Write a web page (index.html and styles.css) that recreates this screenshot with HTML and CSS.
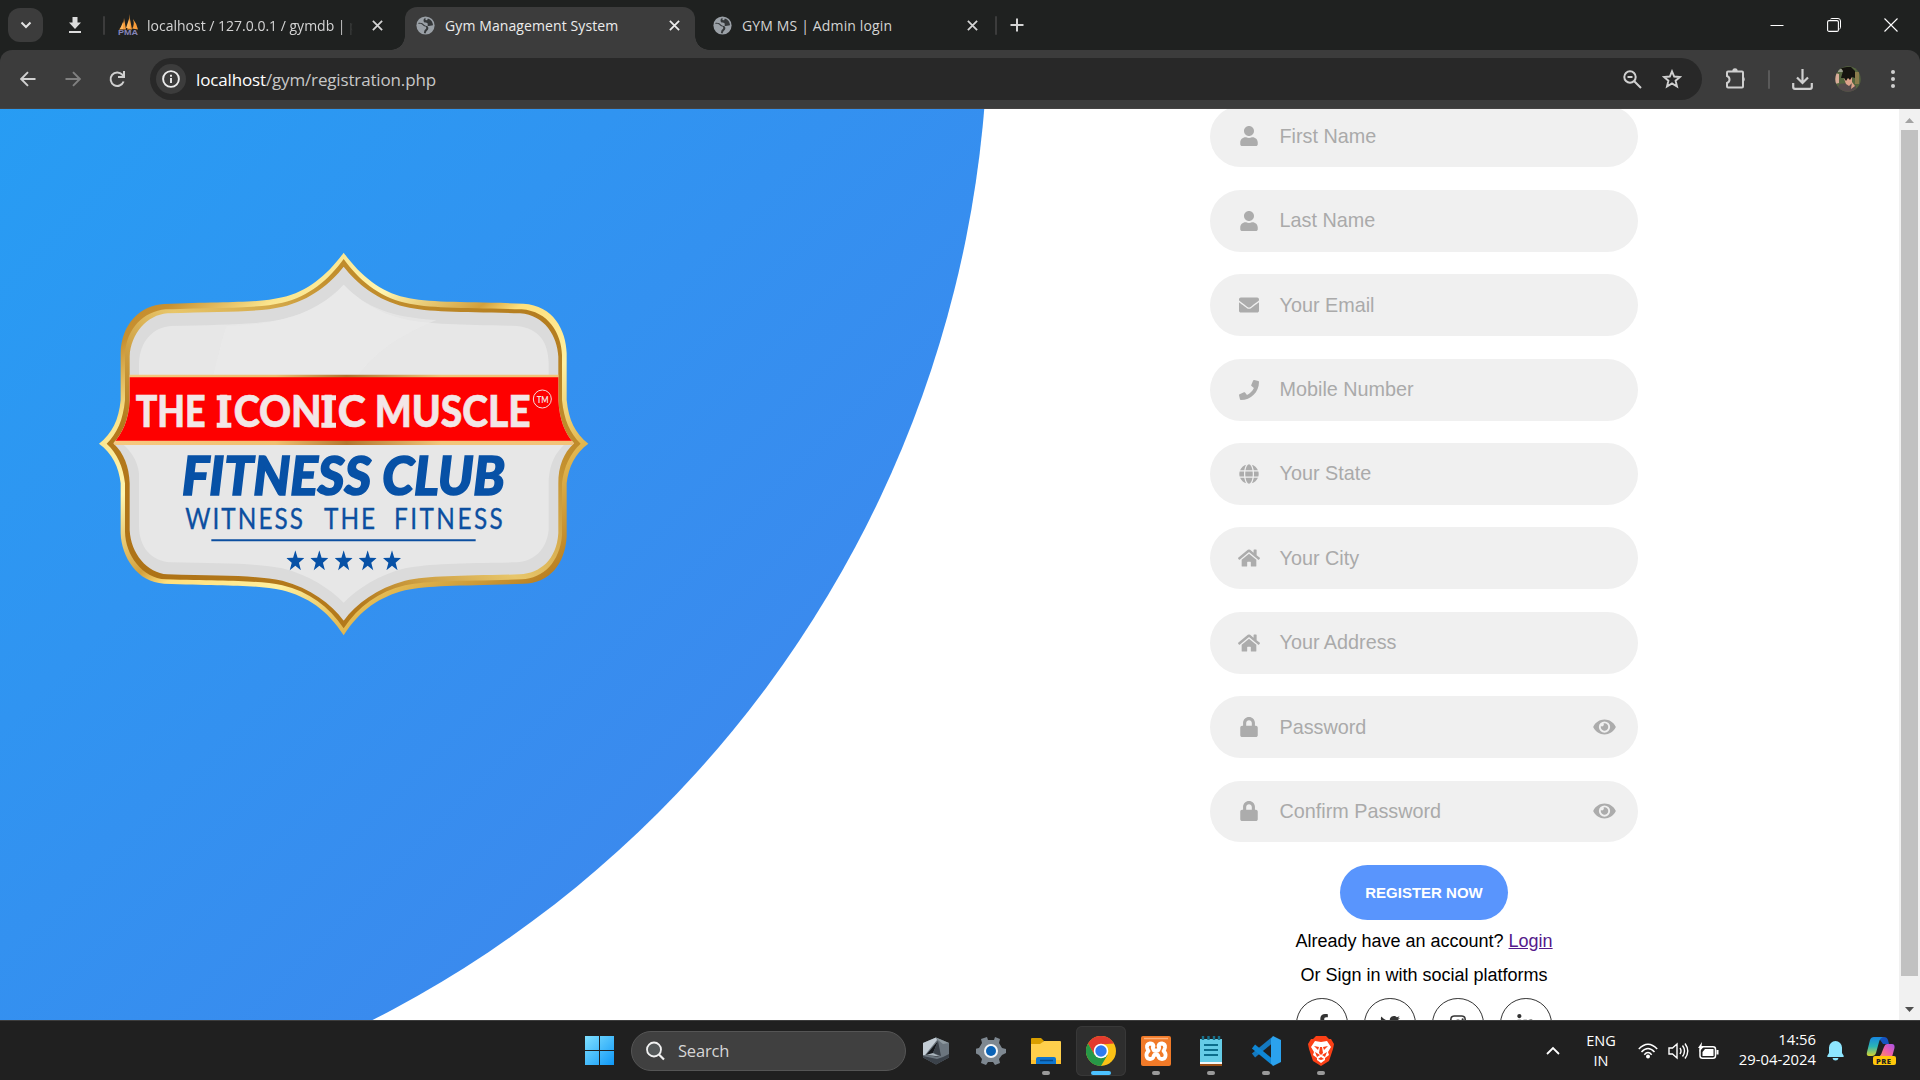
FILE: index.html
```html
<!DOCTYPE html>
<html lang="en">
<head>
<meta charset="utf-8">
<title>Gym Management System</title>
<link rel="stylesheet" href="styles.css">
</head>
<body>
<svg class="defs" width="0" height="0">
  <defs>
    <symbol id="globe-tab" viewBox="0 0 24 24"><circle cx="12" cy="12" r="11.500" fill="#9aa0a6"/><path fill="#35383a" d="M12 2.500c-2.500.5-3 3-2 5 1 1.200 3 .5 4.500 1.500 1 1-.5 2.500.5 3.500 2 .8 3.500-1 5.500-.5l1-.5A9.500 9.500 0 0 0 15 3l-1 2.500-2-.5zM2.800 10c2.500-.5 5 0 6.200 2 1 1.500 4 .5 4 3-.2 2-2.500 2-2.500 4l-.5 2.500 2 .5 1-2.500c1.500-1.500 3-2.500 2.500-5-.8-2.500-4-1.500-5-3-1.500-2.500-4.500-3.500-7.200-3z"/></symbol>
    <symbol id="close" viewBox="0 0 10 10"><path d="M.8.800 9.200 9.200M9.200.800.800 9.200" fill="none" stroke="currentColor" stroke-width="1.600"/></symbol>
    <symbol id="user" viewBox="0 0 448 512"><path d="M224 256c70.700 0 128-57.300 128-128S294.700 0 224 0 96 57.300 96 128s57.300 128 128 128zm89.600 32h-16.700c-22.200 10.200-46.900 16-72.900 16s-50.600-5.800-72.900-16h-16.700C60.200 288 0 348.200 0 422.400V464c0 26.500 21.500 48 48 48h352c26.500 0 48-21.500 48-48v-41.600c0-74.200-60.200-134.400-134.400-134.400z"/></symbol>
    <symbol id="mail" viewBox="0 0 512 512"><path d="M502.300 190.800c3.900-3.100 9.700-.2 9.700 4.700V400c0 26.500-21.500 48-48 48H48c-26.500 0-48-21.500-48-48V195.600c0-5 5.700-7.800 9.700-4.700 22.400 17.400 52.100 39.500 154.100 113.600 21.100 15.400 56.700 47.800 92.200 47.600 35.700.3 72-32.800 92.300-47.600 102-74.100 131.600-96.300 154-113.700zM256 320c23.200.4 56.600-29.200 73.400-41.400 132.700-96.300 142.800-104.700 173.400-128.700 5.800-4.500 9.200-11.500 9.200-18.900v-19c0-26.500-21.500-48-48-48H48c-26.500 0-48 21.500-48 48v19c0 7.400 3.400 14.300 9.200 18.900 30.600 23.900 40.700 32.400 173.400 128.700 16.800 12.200 50.200 41.800 73.400 41.400z"/></symbol>
    <symbol id="phone" viewBox="0 0 512 512"><path d="M493.400 24.600l-104-24c-11.300-2.600-22.900 3.300-27.500 13.900l-48 112c-4.200 9.800-1.400 21.300 6.900 28l60.600 49.600c-36 76.700-98.900 140.500-177.200 177.200l-49.600-60.600c-6.800-8.300-18.200-11.100-28-6.900l-112 48C3.900 366.500-2 378.100.6 389.400l24 104C27.100 504.200 36.700 512 48 512c256.100 0 464-207.500 464-464 0-11.200-7.700-20.900-18.600-23.400z"/></symbol>
    <symbol id="globe" viewBox="0 0 496 512"><path d="M336.500 160C322 70.700 287.800 8 248 8s-74 62.700-88.500 152h177zM152 256c0 22.200 1.200 43.500 3.300 64h185.300c2.100-20.500 3.300-41.800 3.300-64s-1.200-43.500-3.300-64H155.300c-2.100 20.500-3.300 41.800-3.300 64zm324.700-96c-28.600-67.900-86.500-120.400-158-141.600 24.400 33.800 41.200 84.700 50 141.600h108zM177.200 18.400C105.800 39.600 47.800 92.100 19.300 160h108c8.700-56.900 25.500-107.800 49.900-141.600zM487.400 192H372.700c2.100 21 3.300 42.500 3.300 64s-1.200 43-3.300 64h114.600c5.500-20.500 8.600-41.800 8.600-64s-3.100-43.500-8.500-64zM120 256c0-21.500 1.200-43 3.300-64H8.600C3.200 212.500 0 233.800 0 256s3.200 43.500 8.600 64h114.600c-2-21-3.200-42.500-3.200-64zm39.500 96c14.500 89.300 48.700 152 88.500 152s74-62.700 88.500-152h-177zm159.300 141.600c71.400-21.200 129.400-73.700 158-141.600h-108c-8.800 56.900-25.600 107.800-50 141.600zM19.300 352c28.600 67.900 86.500 120.400 158 141.600-24.400-33.800-41.200-84.700-50-141.600h-108z"/></symbol>
    <symbol id="home" viewBox="0 0 576 512"><path d="M280.400 148.300L96 300.100V464a16 16 0 0 0 16 16l112.100-.3a16 16 0 0 0 15.900-16V368a16 16 0 0 1 16-16h64a16 16 0 0 1 16 16v95.600a16 16 0 0 0 16 16.100L464 480a16 16 0 0 0 16-16V300L295.700 148.300a12.200 12.200 0 0 0-15.300 0zM571.600 251.500L488 182.600V44.100a12 12 0 0 0-12-12h-56a12 12 0 0 0-12 12v72.600L318.500 43a48 48 0 0 0-61 0L4.300 251.500a12 12 0 0 0-1.600 16.900l25.500 31a12 12 0 0 0 16.900 1.600L280.400 107.200a12.200 12.200 0 0 1 15.300 0L531 301a12 12 0 0 0 16.900-1.600l25.500-31a12 12 0 0 0-1.800-16.900z"/></symbol>
    <symbol id="lock" viewBox="0 0 448 512"><path d="M400 224h-24v-72C376 68.200 307.800 0 224 0S72 68.200 72 152v72H48c-26.500 0-48 21.500-48 48v192c0 26.500 21.500 48 48 48h352c26.500 0 48-21.500 48-48V272c0-26.500-21.500-48-48-48zm-104 0H152v-72c0-39.700 32.300-72 72-72s72 32.300 72 72v72z"/></symbol>
    <symbol id="eye" viewBox="0 0 576 512"><path d="M572.500 241.400C518.300 135.600 410.900 64 288 64S57.700 135.600 3.500 241.400a32.400 32.400 0 0 0 0 29.200C57.700 376.400 165.100 448 288 448s230.300-71.600 284.500-177.400a32.400 32.400 0 0 0 0-29.200zM288 400a144 144 0 1 1 144-144 143.900 143.900 0 0 1-144 144zm0-240a95.300 95.300 0 0 0-25.300 3.800 47.900 47.900 0 0 1-66.900 66.900A95.800 95.800 0 1 0 288 160z"/></symbol>
    <symbol id="star" viewBox="0 0 20 20" preserveAspectRatio="none"><path d="M10 0 12.500 7.100 20 7.300 14 11.900 16.200 19.200 10 14.800 3.800 19.200 6 11.900 0 7.300 7.500 7.100Z"/></symbol>
  </defs>
</svg>

<header class="tabstrip">
  <button class="tab-search" aria-label="Search tabs"><svg width="12" height="8" viewBox="0 0 12 8"><path d="M1.500 1.500 6 6 10.500 1.500" fill="none" stroke="#e3e3e3" stroke-width="2"/></svg></button>
  <div class="pinned"><svg width="14" height="16" viewBox="0 0 14 16"><path d="M4.500 0h5v5.500h3.500L7 12 1 5.500h3.500zM1 14h12v2H1z" fill="#dcdcdc"/></svg></div>
  <i class="sep"></i>
  <div class="tab tab-first">
    <svg width="21" height="22" viewBox="0 0 21 22"><path d="M1 15.500Q6 11 6 4L8 15.500ZM9 15.500Q12 8 11 0L14 15.500ZM14 14.500Q17 11 15 5Q19 10 20 15.500Z" fill="#f89c3a"/><path d="M2 15 5 8v7zM8 14l3-9 1 9z" fill="#ffb85e"/><text x="0" y="21" class="pma" textLength="20" lengthAdjust="spacingAndGlyphs">PMA</text></svg>
    <span class="title fade"><span class="t1">localhost / 127.0.0.1 / gymdb | p</span></span>
    <svg class="x" width="11" height="11"><use href="#close"/></svg>
  </div>
  <div class="tab tab-active">
    <svg width="19" height="19"><use href="#globe-tab"/></svg>
    <span class="title t2">Gym Management System</span>
    <svg class="x" width="11" height="11"><use href="#close"/></svg>
  </div>
  <div class="tab tab-last">
    <svg width="19" height="19"><use href="#globe-tab"/></svg>
    <span class="title t3">GYM MS | Admin login</span>
    <svg class="x" width="11" height="11"><use href="#close"/></svg>
  </div>
  <i class="sep sep-end"></i>
  <svg class="plus" width="14" height="14" viewBox="0 0 14 14"><path d="M7 .5v13M.5 7h13" stroke="#d4d4d4" stroke-width="2"/></svg>
  <div class="winctl">
    <svg width="14" height="14" viewBox="0 0 14 14"><path d="M.5 7.500h13" stroke="#fff"/></svg>
    <svg width="14" height="14" viewBox="0 0 14 14"><path d="M3.500 1Q4 .5 5 .5h6Q13.500.500 13.500 3v6.500q0 1-1 1.500" fill="none" stroke="#fff"/><rect x=".6" y="2.600" width="10.800" height="10.800" rx="1.500" fill="none" stroke="#fff" stroke-width="1.100"/></svg>
    <svg width="14" height="14" viewBox="0 0 14 14"><path d="M.5.500l13 13M13.500.500l-13 13" stroke="#fff" stroke-width="1.100"/></svg>
  </div>
</header>

<nav class="toolbar">
  <svg class="back" width="16" height="16" viewBox="0 0 16 16"><path d="M15.500 8H1.500M8 1.200 1.200 8 8 14.800" fill="none" stroke="#d0d0d0" stroke-width="1.900"/></svg>
  <svg class="forward" width="16" height="16" viewBox="0 0 16 16"><path d="M.5 8h14M8 1.200 14.800 8 8 14.800" fill="none" stroke="#808080" stroke-width="1.900"/></svg>
  <svg class="reload" width="17" height="17" viewBox="0 0 17 17"><path d="M14.600 10.500A6.700 6.700 0 1 1 13.300 3.700L15 5.500" fill="none" stroke="#d0d0d0" stroke-width="2"/><path d="M16 0v7H9V5h5V0z" fill="#d0d0d0"/></svg>
  <div class="omnibox">
    <span class="info"><svg width="18" height="18" viewBox="0 0 18 18"><circle cx="9" cy="9" r="7.900" fill="none" stroke="#ececec" stroke-width="1.900"/><path d="M9 8v5M9 4.700v2" stroke="#ececec" stroke-width="1.900"/></svg></span>
    <span class="url"><b>localhost</b>/gym/registration.php</span>
    <svg class="lens" width="19" height="19" viewBox="0 0 19 19"><circle cx="7" cy="7" r="5.700" fill="none" stroke="#d0d0d0" stroke-width="2"/><path d="M4.500 7h5M11 11l7 7" stroke="#d0d0d0" stroke-width="2"/></svg>
    <svg class="bookmark" width="20" height="20" viewBox="0 0 20 20"><path d="M10 2.300 12.200 7.500 18 8 13.600 11.700 15 17.500 10 14.400 5 17.500 6.400 11.700 2 8 7.800 7.500Z" fill="none" stroke="#d0d0d0" stroke-width="1.900"/></svg>
  </div>
  <svg class="ext" width="22" height="22" viewBox="0 0 22 22"><path d="M3 3.500h14q1 0 1 1v14q0 1-1 1H3q-1 0-1-1V15q2.500-1 2.500-3.500T2 8V4.500q0-1 1-1z" fill="none" stroke="#cfcfcf" stroke-width="2"/><path d="M7.300 3.500a2.500 3 0 0 1 5.400 0zM18 8.500a3 3 0 0 1 0 5.500z" fill="#cfcfcf"/></svg>
  <i class="sep bar"></i>
  <svg class="dl" width="21" height="21" viewBox="0 0 21 21"><path d="M10.500 0v13.500M5 8.500l5.500 5.500L16 8.500M1.200 14v4q0 1.800 1.800 1.800h15q1.800 0 1.800-1.800v-4" fill="none" stroke="#cfcfcf" stroke-width="2.200"/></svg>
  <svg class="avatar" width="26" height="26" viewBox="0 0 26 26"><clipPath id="av"><circle cx="13" cy="13" r="12.700"/></clipPath><g clip-path="url(#av)"><path fill="#55653f" d="M0 0h26v26H0z"/><path fill="#9a9d8c" d="M3 3h6v3H3z"/><path fill="#d8ab98" d="M0 7l4 1v9l-4 1z"/><path fill="#8b7c4c" d="M20 6h4v12h-4z"/><path fill="#554b4b" d="M2 26 4 18l8-1 9 3v6z"/><path fill="#dfa38b" d="M8 10h9v7l-3 3-3-2zM17 16l3 4-4 3z"/><path fill="#15130f" d="M6 12 8 5 6 2l6-1 4 0 4 4 0 7-3-1-2 3-2-2-2 3-2-3z"/></g></svg>
  <svg class="menu" width="4" height="18" viewBox="0 0 4 18"><g fill="#cfcfcf"><circle cx="2" cy="2" r="2"/><circle cx="2" cy="9" r="2"/><circle cx="2" cy="16" r="2"/></g></svg>
</nav>

<main class="page">
  <section class="hero">
    <div class="disc"></div>
    <svg class="logo" width="510" height="400" viewBox="0 0 1530 1200">
      <defs>
        <linearGradient id="gold" x1="0" y1="0" x2="1" y2="1"><stop offset="0" stop-color="#b9842b"/><stop offset=".14" stop-color="#c8902f"/><stop offset=".24" stop-color="#fbe58e"/><stop offset=".34" stop-color="#fff6b0"/><stop offset=".46" stop-color="#d3a03c"/><stop offset=".5" stop-color="#ffe07c"/><stop offset=".62" stop-color="#fff0a0"/><stop offset=".74" stop-color="#e3b951"/><stop offset=".9" stop-color="#b5791c"/><stop offset="1" stop-color="#d9a03a"/></linearGradient>
        <linearGradient id="gold2" x1="1" y1="0" x2="0" y2="1"><stop offset="0" stop-color="#a96f14"/><stop offset=".3" stop-color="#c4912f"/><stop offset=".5" stop-color="#e8c66a"/><stop offset=".7" stop-color="#b57b1d"/><stop offset="1" stop-color="#a96d12"/></linearGradient>
        <linearGradient id="band"><stop offset="0" stop-color="#f6c981"/><stop offset=".35" stop-color="#f0c070"/><stop offset=".5" stop-color="#b3772d"/><stop offset=".7" stop-color="#f2c67a"/><stop offset="1" stop-color="#f2c278"/></linearGradient>
        <clipPath id="inner"><path d="M761 80C800 130 860 180 945 200C1020 218 1120 214 1290 220C1365 225 1402 290 1405 350V480C1408 540 1425 580 1452 610C1420 640 1405 680 1405 730V880C1400 960 1350 1000 1290 1003C1120 1008 1020 1006 945 1022C860 1045 800 1090 761 1142C722 1090 662 1045 577 1022C502 1006 402 1008 232 1003C172 1000 122 940 119 870V730C117 680 102 640 70 610C97 580 117 540 119 480V350C122 280 172 225 232 220C402 214 502 218 577 200C662 180 722 130 761 80Z"/></clipPath>
      </defs>
      <path fill="url(#gold)" d="M761 38C810 105 870 155 945 172C1020 190 1120 184 1300 191C1390 196 1428 270 1430 340V480C1436 540 1455 580 1495 611C1455 640 1436 680 1430 730V890C1425 970 1380 1030 1300 1031C1120 1038 1020 1034 945 1051C870 1070 810 1110 761 1186C712 1110 652 1070 577 1051C502 1034 402 1038 222 1031C142 1028 94 950 92 880V730C86 680 67 640 27 611C67 580 86 540 92 480V340C94 250 152 196 222 192C402 184 502 190 577 172C652 155 712 105 761 38Z"/>
      <path fill="url(#gold2)" d="M761 57C805 118 865 170 945 188C1020 206 1120 202 1295 208C1375 214 1414 280 1416 345V480C1422 540 1440 580 1472 611C1440 640 1422 680 1416 730V885C1410 965 1360 1016 1295 1018C1120 1024 1020 1020 945 1036C865 1055 805 1100 761 1165C717 1100 657 1055 577 1036C502 1020 402 1024 227 1018C157 1014 106 945 105 875V730C99 680 82 640 50 611C82 580 99 540 105 480V345C108 265 162 214 227 208C402 202 502 206 577 188C657 170 717 118 761 57Z"/>
      <g clip-path="url(#inner)">
        <path fill="#dbdbdb" d="M0 0h1530v1200H0z"/>
        <path fill="#e7e7e7" d="M761 134C805 180 865 220 945 238C1020 254 1120 254 1280 258C1350 265 1375 310 1376 370V520C1380 560 1400 590 1425 611C1395 640 1380 670 1376 720V870C1370 930 1330 965 1280 967C1120 970 1020 970 945 985C865 1005 805 1045 761 1088C717 1045 657 1005 577 985C502 970 402 970 242 967C182 963 148 920 147 860V700C143 660 120 630 97 611C130 590 143 560 147 520V370C150 300 192 262 242 258C402 254 502 254 577 238C657 220 717 180 761 134Z"/>
        <path fill="#ebebeb" d="M370 405C390 330 400 280 410 258C520 258 680 230 761 134C830 205 910 232 1040 240C940 280 860 330 805 405Z" opacity=".6"/>
        <path fill="url(#band)" d="M60 404h1420v211H60z"/>
        <path fill="#fe0000" d="M60 412h1420v190H60z"/>
      </g>
      <text class="l1" x="137" y="562" textLength="210" lengthAdjust="spacingAndGlyphs">THE</text>
      <text class="l1" y="562"><tspan x="381">I</tspan><tspan x="431" textLength="264" lengthAdjust="spacingAndGlyphs">CON</tspan><tspan x="695">I</tspan><tspan x="743" textLength="84" lengthAdjust="spacingAndGlyphs">C</tspan></text>
      <path fill="#f3e6e6" d="M380 466h44v15h-44zM380 548h44v15h-44zM694 466h44v15h-44zM694 548h44v15h-44z"/>
      <text class="l1" x="854" y="562" textLength="468" lengthAdjust="spacingAndGlyphs">MUSCLE</text>
      <circle cx="1357" cy="477" r="27" fill="none" stroke="#f4dede" stroke-width="3"/>
      <text class="tm" x="1340" y="488" textLength="36" lengthAdjust="spacingAndGlyphs">TM</text>
      <text class="l2" x="276" y="764" textLength="568" lengthAdjust="spacingAndGlyphs">FITNESS</text>
      <text class="l2" x="877" y="764" textLength="368" lengthAdjust="spacingAndGlyphs">CLUB</text>
      <g transform="scale(.85 1)">
        <text class="l3" x="336" y="868" textLength="416">WITNESS</text>
        <text class="l3" x="826" y="868" textLength="180">THE</text>
        <text class="l3" x="1073" y="868" textLength="384">FITNESS</text>
      </g>
      <path d="M364 901h793" stroke="#0c4fa0" stroke-width="6"/>
      <g fill="#0751a6"><use href="#star" x="589" y="931" width="54" height="62"/><use href="#star" x="661" y="931" width="54" height="62"/><use href="#star" x="734" y="931" width="54" height="62"/><use href="#star" x="806" y="931" width="54" height="62"/><use href="#star" x="879" y="931" width="54" height="62"/></g>
    </svg>
  </section>
  <form class="form">
    <label class="field"><svg class="ico" width="18" height="20"><use href="#user"/></svg><span>First Name</span></label>
    <label class="field"><svg class="ico" width="18" height="20"><use href="#user"/></svg><span>Last Name</span></label>
    <label class="field"><svg class="ico" width="20" height="20"><use href="#mail"/></svg><span>Your Email</span></label>
    <label class="field"><svg class="ico" width="20" height="20"><use href="#phone"/></svg><span>Mobile Number</span></label>
    <label class="field"><svg class="ico" width="20" height="20"><use href="#globe"/></svg><span>Your State</span></label>
    <label class="field"><svg class="ico" width="22" height="20"><use href="#home"/></svg><span>Your City</span></label>
    <label class="field"><svg class="ico" width="22" height="20"><use href="#home"/></svg><span>Your Address</span></label>
    <label class="field"><svg class="ico" width="18" height="20"><use href="#lock"/></svg><span>Password</span><svg class="eye" width="23" height="20"><use href="#eye"/></svg></label>
    <label class="field"><svg class="ico" width="18" height="20"><use href="#lock"/></svg><span>Confirm Password</span><svg class="eye" width="23" height="20"><use href="#eye"/></svg></label>
    <button class="submit" type="button">REGISTER NOW</button>
    <p class="account">Already have an account? <a href="#">Login</a></p>
    <p class="social-text">Or Sign in with social platforms</p>
    <div class="social">
      <a class="soc"><svg width="13" height="20" viewBox="0 0 320 512"><path d="M279.100 288l14.300-92.700h-89V135.200c0-25.300 12.400-50 52.200-50H297V6.300S260.400 0 225.400 0C152.100 0 104.100 44.400 104.100 124.700v70.600H22.900V288h81.200v224h100.200V288z"/></svg></a>
      <a class="soc"><svg width="20" height="20" viewBox="0 0 512 512"><path d="M459.400 151.700c.3 4.500.3 9.100.3 13.600 0 138.700-105.600 298.600-298.600 298.600-59.500 0-114.700-17.200-161.100-47.100 8.400 1 16.600 1.300 25.300 1.300 49.100 0 94.200-16.600 130.300-44.800-46.100-1-84.800-31.200-98.100-72.800 6.500 1 13 1.600 19.800 1.600 9.400 0 18.800-1.300 27.600-3.600-48.100-9.700-84.100-52-84.100-103v-1.300c14 7.800 30.200 12.700 47.400 13.300-28.300-18.800-46.800-51-46.800-87.400 0-19.500 5.200-37.400 14.300-53 51.700 63.700 129.300 105.300 216.400 109.800-1.600-7.800-2.600-15.900-2.600-24 0-57.800 46.800-104.900 104.900-104.900 30.200 0 57.500 12.700 76.700 33.100 23.700-4.500 46.500-13.300 66.600-25.300-7.800 24.400-24.400 44.800-46.100 57.800 21.100-2.300 41.600-8.100 60.400-16.200-14.300 20.800-32.200 39.300-52.600 54.300z"/></svg></a>
      <a class="soc"><svg width="18" height="20" viewBox="0 0 448 512"><path fill="none" stroke="#333" stroke-width="40" d="M132 52h184q92 0 92 92v224q0 92-92 92H132q-92 0-92-92V144q0-92 92-92z"/><circle cx="224" cy="256" r="94" fill="none" stroke="#333" stroke-width="42"/><circle cx="343" cy="137" r="27"/></svg></a>
      <a class="soc"><svg width="18" height="20" viewBox="0 0 448 512"><path d="M100.300 448H7.400V148.900h92.900zM53.800 108.100C24.100 108.100 0 83.500 0 53.800a53.800 53.800 0 0 1 107.600 0c0 29.700-24.100 54.300-53.800 54.300zM447.900 448h-92.700V302.400c0-34.700-.7-79.200-48.300-79.200-48.300 0-55.700 37.700-55.700 76.700V448h-92.800V148.900h89.100v40.800h1.300c12.400-23.500 42.700-48.300 87.900-48.300 94 0 111.300 61.900 111.300 142.300V448z"/></svg></a>
    </div>
  </form>
  <div class="scroll">
    <svg width="9" height="5" viewBox="0 0 9 5"><path d="M0 5 4.500 0 9 5z" fill="#a3a3a3"/></svg>
    <div class="thumb"></div>
    <svg width="9" height="5" viewBox="0 0 9 5"><path d="M0 0h9L4.500 5z" fill="#505050"/></svg>
  </div>
</main>

<footer class="taskbar">
  <svg class="win" width="29" height="29" viewBox="0 0 29 29"><defs><linearGradient id="w" x1="0" y1="0" x2="1" y2="1"><stop offset="0" stop-color="#7fe0ff"/><stop offset="1" stop-color="#0f98f7"/></linearGradient></defs><path fill="url(#w)" d="M0 0h14v14H0zM15 0h14v14H15zM0 15h14v14H0zM15 15h14v14H15z"/></svg>
  <div class="search"><svg width="19" height="20" viewBox="0 0 19 20"><circle cx="8" cy="8.500" r="7" fill="#55595a" stroke="#f2f2f2" stroke-width="1.800"/><path d="M13 13.500l5 5" stroke="#f2f2f2" stroke-width="2.200"/></svg><span>Search</span></div>
  <div class="apps">
    <div class="app"><svg width="30" height="30" viewBox="0 0 30 30"><path fill="#6b757e" d="M15 1.500 28 7v14.500L15 28.500 2 21.500V7z"/><path fill="#c3cdd5" d="M15 1.500 16 4 4 19 2 19V7z"/><path fill="#8d989f" d="M15 1.500 28 7l-6 1-5-4z"/><path fill="#3b424a" d="m2 20 14 3 6-2 6-3v3.500L15 28.500 2 21.500z"/><path fill="#14171b" d="M17 5 5 19l14 2-7-4z"/><path fill="#3a4149" d="M17 5 20 20l-8-3z"/><path fill="#a9b4bc" d="m5 19 7-2 7 3.500z"/></svg></div>
    <div class="app"><svg width="30" height="30" viewBox="0 0 30 30"><path fill="#7e8891" d="m11 1 1 3h6l1-3 5 2-1 4 3 5 4 1v4l-4 2-3 4 1 4-5 2-2-3h-5l-2 3-5-2 1-4-3-4-4-2v-4l4-1 3-5-1-4z"/><circle cx="15" cy="15" r="7" fill="#f4f6f8"/><circle cx="15" cy="15" r="5" fill="#0b63b6"/></svg></div>
    <div class="app run"><svg width="30" height="30" viewBox="0 0 30 30"><path fill="#d99f00" d="M0 3q0-1 1-1h9l3 3-3 4H0z"/><path fill="#ffd04c" d="M0 8h9l4-3h16q1 0 1 1v22H0z"/><path fill="#fdbf2d" d="M0 24h30v4H0z"/><path fill="#0f76cf" d="M5 28v-5q0-2 2-2h16q2 0 2 2v5z"/><path stroke="#064a8c" stroke-width="1.500" d="M9 24.500h13"/></svg></div>
    <div class="app run on"><svg width="30" height="30" viewBox="0 0 30 30"><circle cx="15" cy="15" r="15" fill="#fbc116"/><path fill="#e33b2e" d="M2 7.500A15 15 0 0 1 28 7.500L15 8.500 8.500 19z"/><path fill="#279847" d="M2 7.500A15 15 0 0 0 15 30l6.500-11H15L8.500 18.700z"/><circle cx="15" cy="15" r="7.300" fill="#fff"/><circle cx="15" cy="15" r="5.700" fill="#2f7bef"/></svg></div>
    <div class="app run"><svg width="30" height="30" viewBox="0 0 30 30"><rect width="30" height="30" rx="2" fill="#f17a28"/><path stroke="#ffb27b" stroke-width="1.500" d="M3 2.500h24"/><path fill="none" stroke="#fff" stroke-width="3.800" stroke-linejoin="round" stroke-linecap="round" d="M13 14.500 17 14.500Q19 12 17.500 10 18 7.500 21 7.500 24.500 8 24 11.500 23.500 14 22.500 15 25 17 24.500 20 24 23 21 23 18 23 17.500 20.500 17 18.500 15 18.500 13 18.500 12.500 20.500 12 23 9 23 6 23 5.500 20 5 17 7.500 15 6.500 14 6 11.500 5.500 8 9 7.500 12 7.500 12.500 10 11 12 13 14.500"/></svg></div>
    <div class="app run"><svg width="24" height="30" viewBox="0 0 24 30"><path fill="#9c4f14" d="M1 26h22v4H1z"/><path fill="#f3f6f7" d="M1 25h22v3H1z"/><path fill="#65cce6" d="M1 3h22v23H1z"/><path stroke="#0c6d8b" stroke-width="2" d="M5 9h14M5 14h14M5 19h14"/><path stroke="#17718c" stroke-width="2.400" d="M4 0v4M9.500 0v4M15 0v4M20 0v4"/></svg></div>
    <div class="app run"><svg width="30" height="30" viewBox="0 0 30 30"><path fill="none" stroke="#1479c0" stroke-width="5" stroke-linejoin="round" d="M2.500 19.500 22 3.500"/><path fill="none" stroke="#0f87d5" stroke-width="5" stroke-linejoin="round" d="M2.500 10.500 22 26.500"/><path fill="#2ba2ee" d="m22 0 8 4v22l-8 4-2-2.500V2.500z"/></svg></div>
    <div class="app run"><svg width="26" height="30" viewBox="0 0 26 30"><path fill="#fb4016" d="M8 0h10l3 3h2l3 5-1 5-4 12-8 5-8-5-4-12-1-5 3-5h2z"/><path fill="#fff" d="m7 5 6 1 6-1 4 6-3 5 1 3-4 3 0 2-4 3-4-3v-2l-4-3 1-3-3-5z"/><path fill="#fb4016" d="m6 10 5 1-1 3zM20 10l-5 1 1 3zM12 11h2l1 6-2 2-2-2zM7 16l5 3-3 2zM19 16l-5 3 3 2zM10 23l3-2 3 2-3 1z"/></svg></div>
  </div>
  <div class="tray">
    <svg class="chev" width="14" height="9" viewBox="0 0 14 9"><path d="M1 8 7 2l6 6" fill="none" stroke="#fff" stroke-width="1.800"/></svg>
    <div class="lang"><span>ENG</span><span>IN</span></div>
    <svg class="wifi" width="20" height="16" viewBox="0 0 20 16"><g fill="none" stroke="#fff" stroke-width="1.500"><path d="M.8 6Q10-3.500 19.200 6M3.500 9Q10 2 16.500 9M6.300 11.700Q10 7.500 13.700 11.700"/></g><circle cx="10" cy="13.500" r="2" fill="#fff"/></svg>
    <svg class="vol" width="21" height="18" viewBox="0 0 21 18"><g fill="none" stroke="#fff" stroke-width="1.400"><path d="M1 6h3.500L9 2v14l-4.500-4H1zM12 6q2 3 0 6M14.500 3.500q4 5.500 0 11M17 1.500q5.500 7.500 0 15"/></g></svg>
    <svg class="bat" width="21" height="18" viewBox="0 0 21 18"><rect x="2" y="4.700" width="15.500" height="11.500" rx="2.500" fill="none" stroke="#fff" stroke-width="1.500"/><path fill="#fff" d="M7 7h8.500v7H4.500v-4zM18.500 8h2v4.500h-2zM4 0 0 6h2.500L1 10l5-5.500H3.500z"/></svg>
    <div class="clock"><span>14:56</span><span>29-04-2024</span></div>
    <svg class="bell" width="17" height="20" viewBox="0 0 17 20"><path fill="#8ee6ff" d="M8.500 0a6.500 6.500 0 0 1 6.500 6.500V12l1.800 3q.2 1-.8 1H1q-1 0-.8-1L2 12V6.500A6.500 6.500 0 0 1 8.500 0zM5.500 17h6q-.5 2.500-3 2.500T5.500 17z"/></svg>
    <svg class="cop" width="30" height="30" viewBox="0 0 30 30"><defs><linearGradient id="c1" x1="0" y1="0" x2="0" y2="1"><stop offset="0" stop-color="#1787e0"/><stop offset=".5" stop-color="#2bb5b5"/><stop offset="1" stop-color="#d8d52c"/></linearGradient><linearGradient id="c2" x1="1" y1="0" x2="0" y2="1"><stop offset="0" stop-color="#a653e8"/><stop offset=".5" stop-color="#ee5fa8"/><stop offset="1" stop-color="#ff9a4d"/></linearGradient></defs><path fill="#1553c0" d="M12 1h6q3 0 4 3l1 4h-6z"/><path fill="url(#c1)" d="M8 1h9q-3 1-4 5L10 17q-1 3-4 3H3q-3 0-2-4L4 4q1-3 4-3z"/><path fill="url(#c2)" d="M21 8h5q3 0 2.500 4L26 21H12q3-1 4-5l2-5q1-3 3-3z"/><rect x="7" y="20" width="23" height="9" rx="2" fill="#ffc70a"/><text x="10" y="27.500" class="pre">PRE</text></svg>
  </div>
</footer>
</body>
</html>
```

FILE: styles.css
```css
* { box-sizing: border-box; }
body {
  margin: 0;
  width: 1920px;
  height: 1080px;
  overflow: hidden;
  display: flex;
  flex-direction: column;
  background: #1f2120;
  font-family: "Open Sans", "Noto Sans", sans-serif;
}
svg { display: block; flex: none; }
button { border: 0; padding: 0; }
.defs { position: absolute; }

/* Tab strip */
.tabstrip { height: 50px; display: flex; align-items: center; background: #1f2120; color: #d4d4d4; flex: none; }
.tab-search { width: 35px; height: 34px; margin-left: 8px; border-radius: 12px; background: #3c3c3c; display: grid; place-items: center; }
.pinned { margin-left: 25px; }
.sep { width: 2px; height: 19px; background: #3c3c3c; border-radius: 1px; flex: none; }
.pinned + .sep { margin-left: 21px; }
.tab { display: flex; align-items: center; height: 50px; font-size: 14px; }
.title { white-space: nowrap; }
.x { margin-left: auto; }
.tab-first { width: 265px; margin-left: 13px; }
.tab-first .title { margin-left: 8px; width: 208px; overflow: hidden; }
.fade { -webkit-mask-image: linear-gradient(90deg, #000 93%, transparent 99%); mask-image: linear-gradient(90deg, #000 93%, transparent 99%); }
.t1 { letter-spacing: 0; }
.t2 { letter-spacing: 0.1px; }
.t3 { letter-spacing: 0.15px; }
.tab-active {
  position: relative;
  width: 290px;
  height: 43px;
  margin: 7px 0 0 22px;
  padding: 0 15px 7px 11px;
  background: #3c3c3c;
  border-radius: 12px 12px 0 0;
  color: #ececec;
}
.tab-active::before, .tab-active::after {
  content: "";
  position: absolute;
  bottom: 0;
  width: 14px;
  height: 14px;
}
.tab-active::before { left: -14px; background: radial-gradient(circle at 0 0, transparent 13.5px, #3c3c3c 14px); }
.tab-active::after { right: -14px; background: radial-gradient(circle at 100% 0, transparent 13.5px, #3c3c3c 14px); }
.tab-active .title, .tab-last .title { margin-left: 10px; }
.tab-last { width: 265px; margin-left: 18px; }
.sep-end { margin-left: 17px; }
.plus { margin-left: 13px; }
.winctl { margin-left: auto; margin-right: 22px; display: flex; gap: 43px; }
.pma { font: bold 8px "Liberation Sans", sans-serif; fill: #8584b8; }

/* Address bar */
.toolbar { height: 59px; flex: none; display: flex; align-items: center; background: #3c3c3c; border-radius: 12px 12px 0 0; padding-left: 20px; border-bottom: 1px solid #454343; }
.forward { margin-left: 29px; }
.reload { margin-left: 28px; }
.omnibox { margin-left: 24px; width: 1552px; height: 42px; border-radius: 21px; background: #282828; display: flex; align-items: center; }
.info { width: 30px; height: 30px; margin-left: 6px; border-radius: 50%; background: #3c3c3c; display: grid; place-items: center; }
.url { margin-left: 10px; font-size: 17px; letter-spacing: -0.15px; color: #c7c7c7; }
.url b { font-weight: 400; color: #fff; }
.lens { margin-left: auto; }
.bookmark { margin: 0 20px 0 20px; }
.ext { margin-left: 23px; }
.bar { margin-left: 21px; background: #5a5a5a; }
.dl { margin-left: 22px; }
.avatar { margin-left: 22px; }
.menu { margin-left: 30px; }

/* Page viewport */
.page { position: relative; height: 911px; flex: none; display: flex; background: #fff; overflow: hidden; font-family: "Liberation Sans", Arial, sans-serif; }
.hero { width: 1210px; flex: none; padding: 131px 0 0 90px; }
.disc {
  position: absolute;
  left: -1262.5px;
  top: -1217px;
  width: 2250px;
  height: 2250px;
  border-radius: 50%;
  background: linear-gradient(-45deg, #4481eb 0%, #04befe 100%);
}
.logo { position: relative; }
.l1 { font: 900 131px Lato, sans-serif; fill: #f3e6e6; stroke: #f3e6e6; stroke-width: 2; }
.tm { font: bold 28px Lato, sans-serif; fill: #f4dede; }
.l2 { font: italic 900 160px Lato, sans-serif; fill: #0751a6; stroke: #0751a6; stroke-width: 5; }
.l3 { font: 86px Lato, sans-serif; fill: #0c4fa0; stroke: #0c4fa0; stroke-width: 1; }

.form { width: 428px; flex: none; margin-top: -3.5px; display: flex; flex-direction: column; align-items: center; }
.field {
  width: 428px;
  height: 61.875px;
  margin-bottom: 22.5px;
  padding: 0 22px 0 7.5px;
  flex: none;
  display: grid;
  grid-template-columns: 62px 1fr auto;
  align-items: center;
  border-radius: 62px;
  background: #f0f0f0;
  color: #aaa;
  fill: #acacac;
  font-size: 19.8px;
}
.ico { justify-self: center; }
.submit { width: 168px; height: 55px; flex: none; border-radius: 55px; background: #5995fd; color: #fff; font: 600 15px "Liberation Sans", Arial, sans-serif; }
.account, .social-text { margin: 0; font-size: 18px; line-height: 21px; color: #000; white-space: nowrap; }
.account { margin-top: 11px; }
.account a { color: #551a8b; }
.social-text { margin-top: 13px; }
.social { display: flex; gap: 16.2px; margin-top: 12px; flex: none; }
.soc { width: 51.75px; height: 51.75px; border: 1px solid #333; border-radius: 50%; display: grid; place-items: center; fill: #333; }

.scroll { margin-left: auto; width: 21px; height: 911px; background: #f1f1f1; display: flex; flex-direction: column; align-items: center; padding: 9px 0 8px; }
.thumb { width: 17px; height: 846px; margin-top: 7px; margin-bottom: auto; background: #c1c1c1; }

/* Taskbar */
.taskbar { height: 60px; flex: none; background: #202020; border-top: 1px solid #3d3d3d; display: flex; align-items: center; padding-left: 585px; color: #fff; }
.search { width: 275px; height: 40px; margin-left: 17px; border: 1px solid #555; border-radius: 20px; background: #404040; display: flex; align-items: center; padding-left: 14px; }
.search span { margin-left: 13px; font-size: 16.5px; letter-spacing: -0.2px; color: #d6d6d6; }
.apps { display: flex; gap: 5px; margin-left: 5px; }
.app { position: relative; width: 50px; height: 50px; display: grid; place-items: center; border-radius: 6px; }
.on { background: #2e2e2e; box-shadow: inset 0 0 0 1px #383838; }
.run::after { content: ""; position: absolute; left: 21px; bottom: 1px; width: 8px; height: 4px; border-radius: 2px; background: #9a9a9a; }
.on::after { left: 15px; width: 20px; background: #4cc2ff; }
.tray { margin-left: auto; display: flex; align-items: center; font-size: 14.5px; }
.lang, .clock { display: flex; flex-direction: column; line-height: 20px; white-space: nowrap; }
.lang { width: 40px; margin-left: 21px; align-items: center; }
.wifi { margin-left: 17px; }
.vol { margin-left: 10px; }
.bat { margin-left: 9px; }
.clock { width: 90px; margin-left: 7px; margin-bottom: 3px; align-items: flex-end; font-size: 14.8px; }
.bell { margin-left: 11px; }
.cop { margin-left: 22px; margin-right: 24px; }
.pre { font: 800 7.5px "Open Sans", sans-serif; letter-spacing: 0.5px; fill: #222; }
```
